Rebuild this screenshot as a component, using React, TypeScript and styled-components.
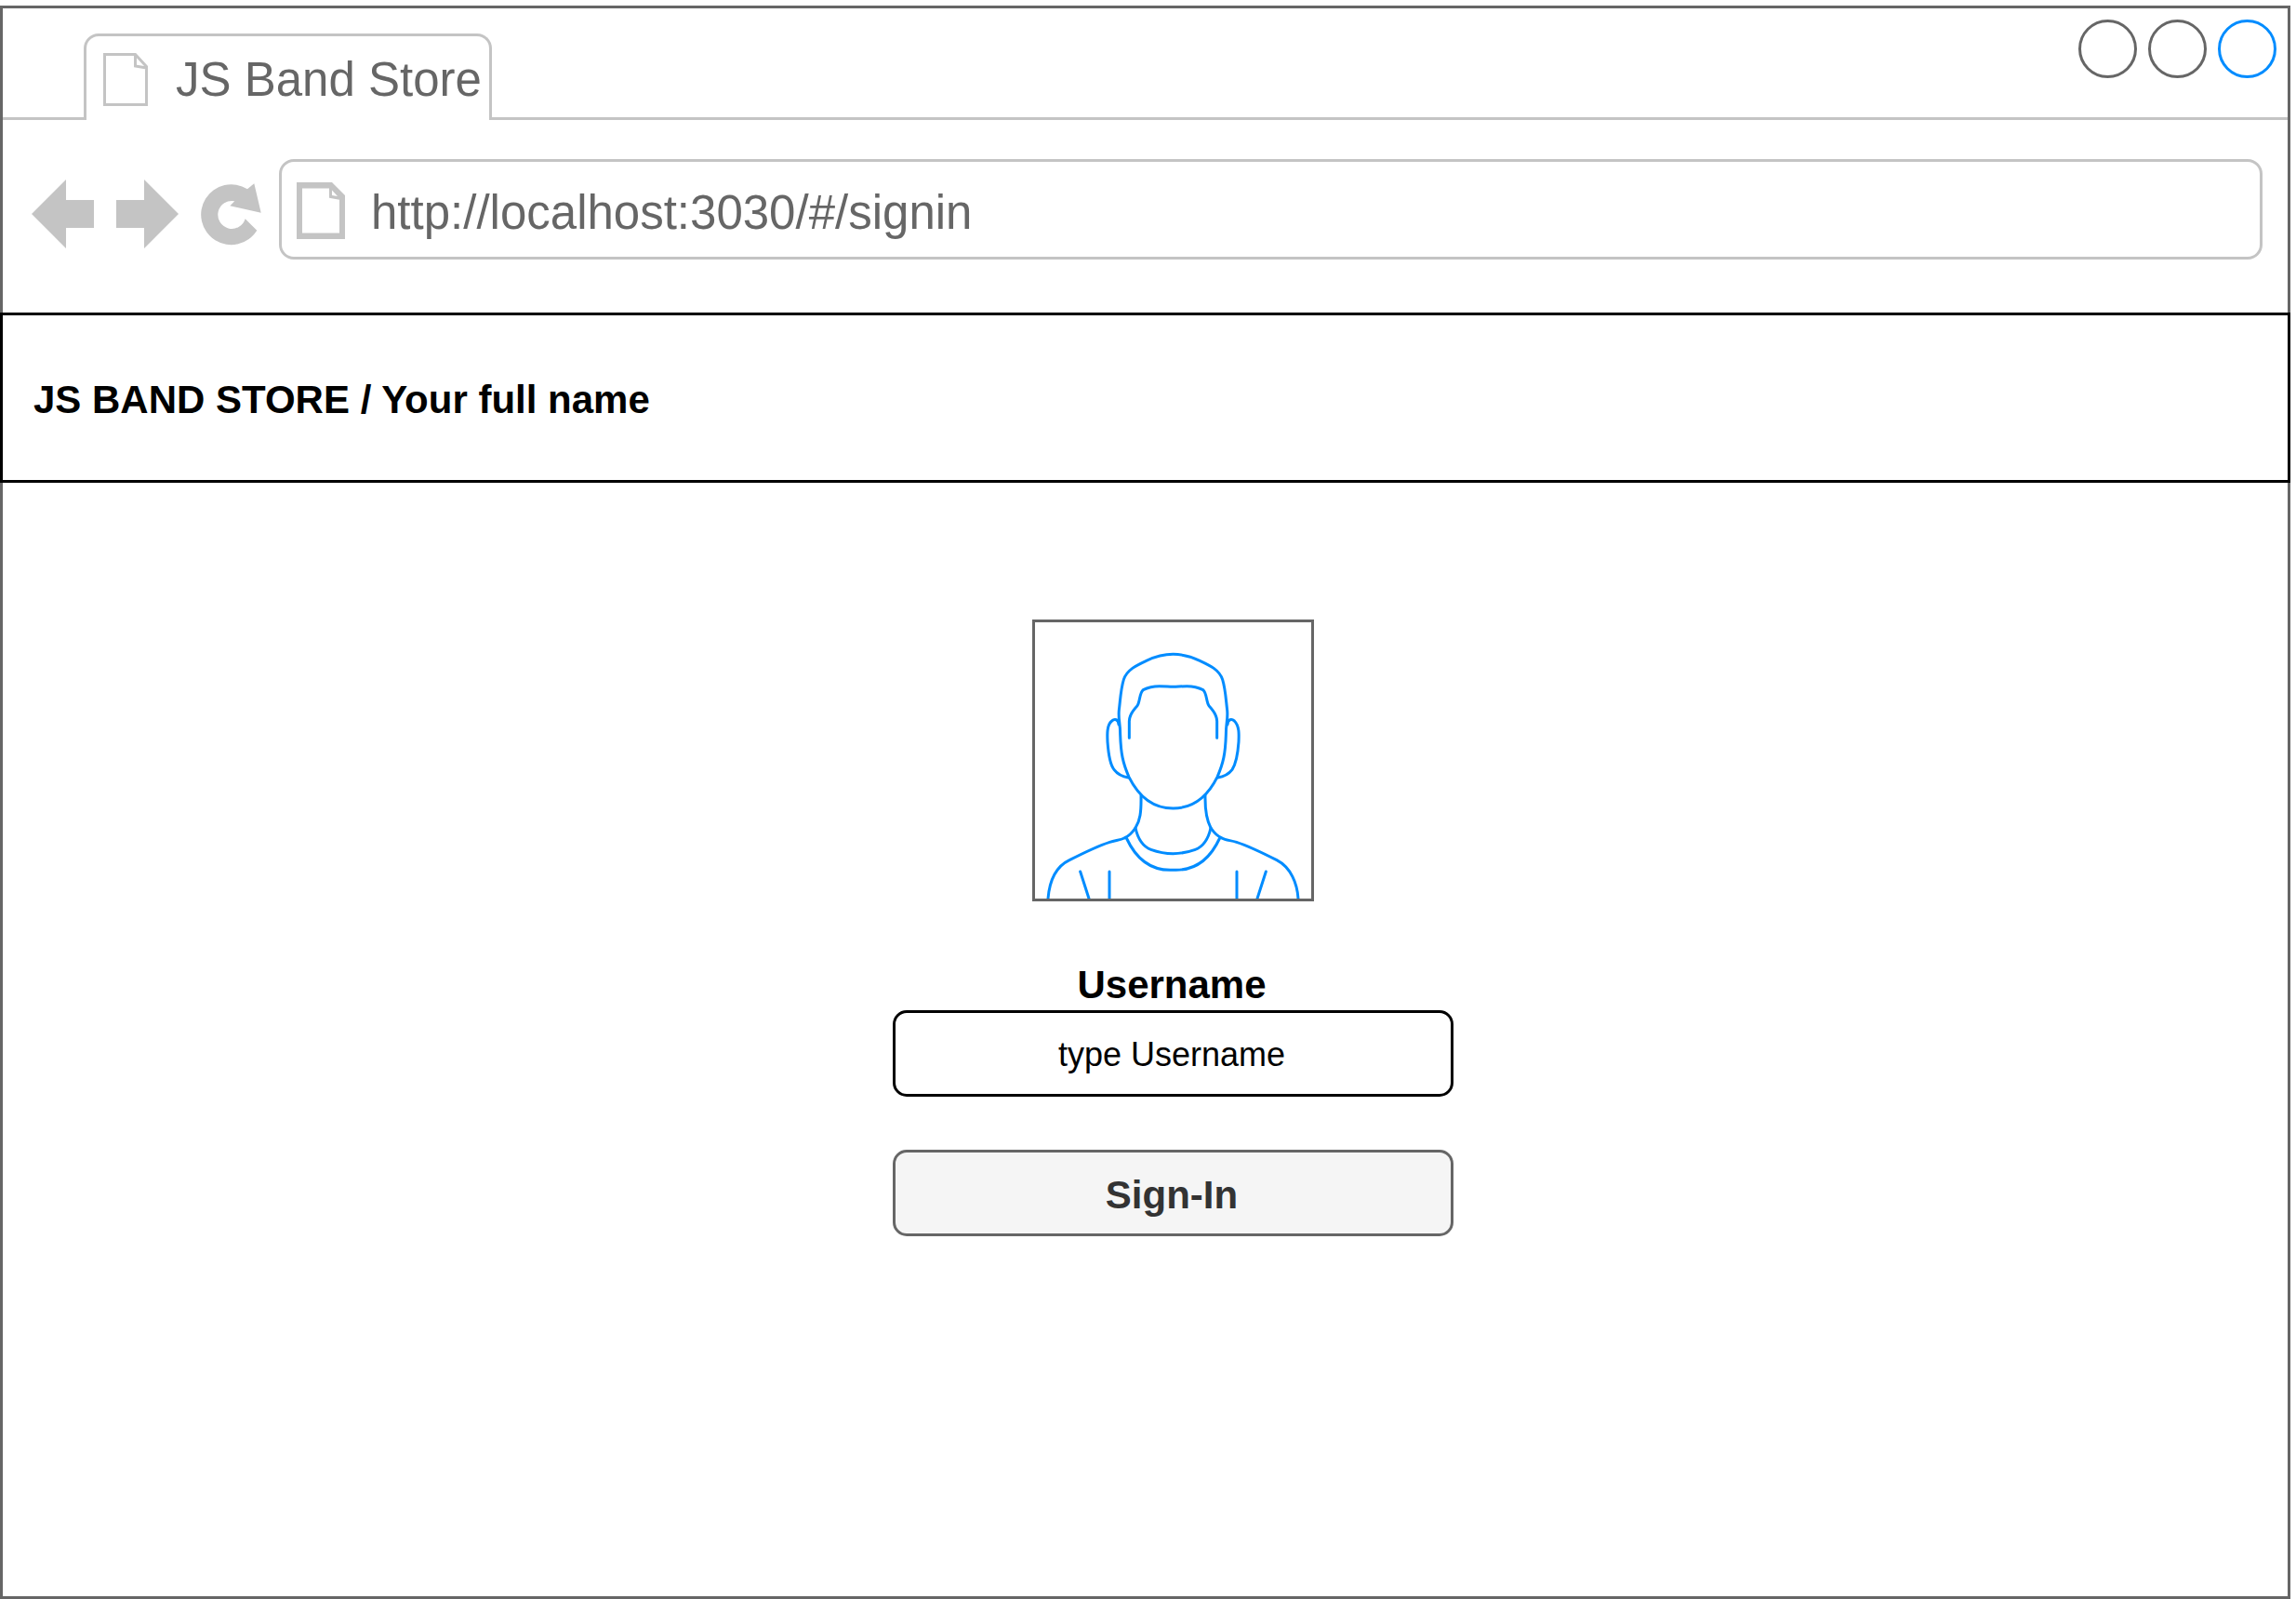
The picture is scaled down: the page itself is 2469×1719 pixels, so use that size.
import React from "react";
import styled, { createGlobalStyle } from "styled-components";

const color = {
  line: "#666666",
  soft: "#c4c4c4",
  accent: "#008cff",
  ink: "#000000",
};

const GlobalStyle = createGlobalStyle`
  *, *::before, *::after { box-sizing: border-box; }
  body { margin: 0; background: #ffffff; }
  body, button, input { font-family: "Liberation Sans", Arial, Helvetica, sans-serif; }
  svg { display: block; flex: none; }
`;

const Page = styled.div`
  display: flex;
  min-height: 100vh;
  padding: 6px 6px 0 0;
`;

const BrowserWindow = styled.div`
  flex: 1;
  min-width: 0;
  display: flex;
  flex-direction: column;
  border: 3px solid ${color.line};
`;

const TabStrip = styled.div`
  display: flex;
  align-items: stretch;
  height: 120px;
`;

const StripLead = styled.div`
  width: 87px;
  border-bottom: 3px solid ${color.soft};
`;

const StripRest = styled.div`
  flex: 1;
  display: flex;
  justify-content: flex-end;
  align-items: flex-start;
  gap: 12px;
  padding: 12px;
  border-bottom: 3px solid ${color.soft};
`;

const Tab = styled.button`
  display: flex;
  align-items: center;
  gap: 30px;
  margin: 27px 0 0;
  padding: 3px 8px 0 18px;
  border: 3px solid ${color.soft};
  border-bottom: 0;
  border-radius: 16px 16px 0 0;
  background: none;
  color: ${color.line};
  font-size: 51px;
  line-height: 60px;
  white-space: nowrap;
`;

const WindowControl = styled.button<{ $accent?: boolean }>`
  width: 63px;
  height: 63px;
  padding: 0;
  border: 3px solid ${(p) => (p.$accent ? color.accent : color.line)};
  border-radius: 50%;
  background: none;
`;

const Toolbar = styled.div`
  display: flex;
  gap: 19px;
  padding: 42px 27px 57px 31px;
`;

const NavButtons = styled.nav`
  display: flex;
  align-items: center;
  gap: 24px;
  padding-top: 9px;
`;

const NavButton = styled.button`
  padding: 0;
  border: 0;
  background: none;
  color: ${color.soft};
`;

const AddressBar = styled.label`
  flex: 1;
  min-width: 0;
  display: flex;
  align-items: center;
  gap: 28px;
  height: 108px;
  padding: 3px 16px 0;
  border: 3px solid ${color.soft};
  border-radius: 16px;
`;

const AddressInput = styled.input`
  flex: 1;
  min-width: 0;
  height: 66px;
  padding: 3px 0 0;
  border: 0;
  outline: 0;
  background: none;
  color: ${color.line};
  font-size: 51px;
`;

const SiteHeader = styled.header`
  display: flex;
  align-items: center;
  height: 183px;
  margin: 0 -3px;
  padding: 5px 33px 0;
  border: 3px solid ${color.ink};
`;

const SiteTitle = styled.h1`
  margin: 0;
  font-size: 42px;
  line-height: 54px;
`;

const Main = styled.main`
  flex: 1;
  display: flex;
  justify-content: center;
  padding: 147px 0 60px 60px;
`;

const SignInForm = styled.form`
  display: flex;
  flex-direction: column;
  align-items: center;
  width: 603px;
`;

const Avatar = styled.div`
  width: 303px;
  height: 303px;
  margin-bottom: 63px;
  border: 3px solid ${color.line};
`;

const FieldLabel = styled.label`
  padding-right: 3px;
  font-size: 42px;
  font-weight: bold;
  line-height: 54px;
`;

const TextField = styled.input`
  width: 100%;
  height: 93px;
  margin-bottom: 57px;
  padding: 3px 15px 0 12px;
  border: 3px solid ${color.ink};
  border-radius: 15px;
  background: none;
  font-size: 36px;
  text-align: center;
  &::placeholder {
    color: ${color.ink};
    opacity: 1;
  }
`;

const SubmitButton = styled.button`
  width: 100%;
  height: 93px;
  padding: 4px 15px 0 12px;
  border: 3px solid ${color.line};
  border-radius: 15px;
  background: #f5f5f5;
  color: #333333;
  font-size: 42px;
  font-weight: bold;
`;

const TabPageIcon = () => (
  <svg width="48" height="57" viewBox="0 0 48 57" fill="none" stroke={color.soft} strokeWidth="3" aria-hidden="true">
    <path d="M1.5 1.5H34.5L46.5 14.5V55.5H1.5ZM34.5 1.5V14L46.5 16" />
  </svg>
);

const AddressPageIcon = () => (
  <svg width="52" height="61" viewBox="0 0 52 61" fill={color.soft} fillRule="evenodd" aria-hidden="true">
    <path d="M0 0H38L52 14V61H0ZM6 6.500V54.500H46V18.700L35 16.700V6.500ZM38 8.500V14L44 15Z" />
  </svg>
);

const BackIcon = () => (
  <svg width="67" height="74" viewBox="0 0 67 74" fill="currentColor" aria-hidden="true">
    <path d="M0 37L37 0V22H67V52H37V74Z" />
  </svg>
);

const ForwardIcon = () => (
  <svg width="67" height="74" viewBox="0 0 67 74" fill="currentColor" aria-hidden="true">
    <path d="M67 37L30 0V22H0V52H30V74Z" />
  </svg>
);

const ReloadIcon = () => (
  <svg width="65" height="74" viewBox="216 192.5 65 74" fill="currentColor" aria-hidden="true">
    <path d="M266 202.700L273.300 196.700L280.700 228.300L247.300 220.700L252.300 215.700A15 15 0 1 0 263.700 234.700L276.300 247.300A32.500 32.500 0 1 1 266 202.700Z" />
  </svg>
);

const Portrait = () => (
  <svg
    width="297"
    height="297"
    viewBox="69 57 891 891"
    fill="none"
    stroke={color.accent}
    strokeWidth="9"
    strokeLinecap="round"
    strokeLinejoin="round"
    role="img"
    aria-label="User portrait"
  >
    <path d="M514.500 160C480 160 458 167 428 181C398 195 365 210 355 242C345 275 344 310 340 340C337 370 344 380 344 420C346 480 352 510 372 556C405 622 450 657 514.500 657C579 657 624 622 657 556C677 510 683 480 685 420C685 380 692 370 689 340C685 310 684 275 674 242C664 210 631 195 601 181C571 167 549 160 514.500 160Z" />
    <path d="M373 430V376C373 356 386 340 399 326C408 314 405 286 418 275C435 266 455 263 470 263C490 263 500 265 514.500 265C529 265 539 263 559 263C574 263 594 266 611 275C624 286 621 314 630 326C643 340 656 356 656 376V430" />
    <path d="M339 387C338 368 325 368 317 375C300 388 302 420 303 443C306 485 310 515 324 532C336 548 352 555 371 558" />
    <path d="M690 387C691 368 704 368 712 375C729 392 727 420 726 443C723 485 719 511 705 532C693 548 677 555 658 558" />
    <path d="M411 616C412 670 408 696 393 720C383 735 371 747 357 753C345 759 330 760 310 766C270 779 225 801 180 824C130 848 115 900 111 948" />
    <path d="M618 616C617 670 623 696 636 720C646 735 658 747 672 753C684 760 699 760 719 766C759 779 804 801 849 824C895 848 915 900 918 948" />
    <path d="M393 720C400 752 417 780 443 790C465 798 490 803 514.500 803C539 803 564 798 586 790C612 780 629 752 636 720" />
    <path d="M364 753C395 820 440 856 505 856H524C589 856 634 820 665 753" />
    <path d="M215 861L243 948M309 861V948M720 861V948M814 861L786 948" />
  </svg>
);

export default function App() {
  return (
    <>
      <GlobalStyle />
      <Page>
        <BrowserWindow>
          <TabStrip>
            <StripLead />
            <Tab type="button">
              <TabPageIcon />
              JS Band Store
            </Tab>
            <StripRest>
              <WindowControl type="button" aria-label="Minimize" />
              <WindowControl type="button" aria-label="Maximize" />
              <WindowControl type="button" aria-label="Close" $accent />
            </StripRest>
          </TabStrip>
          <Toolbar>
            <NavButtons aria-label="History">
              <NavButton type="button" aria-label="Back">
                <BackIcon />
              </NavButton>
              <NavButton type="button" aria-label="Forward">
                <ForwardIcon />
              </NavButton>
              <NavButton type="button" aria-label="Reload">
                <ReloadIcon />
              </NavButton>
            </NavButtons>
            <AddressBar>
              <AddressPageIcon />
              <AddressInput
                type="text"
                aria-label="Address"
                spellCheck={false}
                defaultValue="http://localhost:3030/#/signin"
              />
            </AddressBar>
          </Toolbar>
          <SiteHeader>
            <SiteTitle>JS BAND STORE / Your full name</SiteTitle>
          </SiteHeader>
          <Main>
            <SignInForm onSubmit={(e) => e.preventDefault()}>
              <Avatar>
                <Portrait />
              </Avatar>
              <FieldLabel htmlFor="username">Username</FieldLabel>
              <TextField id="username" type="text" placeholder="type Username" />
              <SubmitButton type="submit">Sign-In</SubmitButton>
            </SignInForm>
          </Main>
        </BrowserWindow>
      </Page>
    </>
  );
}
